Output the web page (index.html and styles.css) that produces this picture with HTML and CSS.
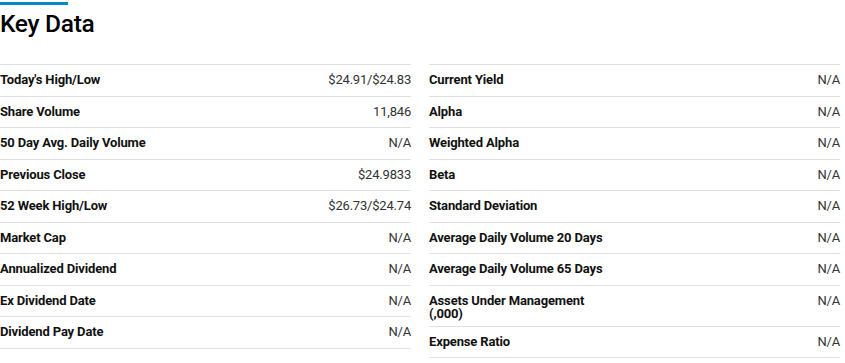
FILE: index.html
```html
<!DOCTYPE html>
<html lang="en">
<head>
<meta charset="utf-8">
<title>Key Data</title>
<link rel="stylesheet" href="styles.css">
</head>
<body>
<section class="key-data">
  <div class="accent"></div>
  <h2 class="title">Key Data</h2>
  <div class="columns">
    <dl class="list">
      <div class="row"><dt class="label">Today's High/Low</dt><dd class="value">$24.91/$24.83</dd></div>
      <div class="row"><dt class="label">Share Volume</dt><dd class="value">11,846</dd></div>
      <div class="row"><dt class="label">50 Day Avg. Daily Volume</dt><dd class="value">N/A</dd></div>
      <div class="row"><dt class="label">Previous Close</dt><dd class="value">$24.9833</dd></div>
      <div class="row"><dt class="label">52 Week High/Low</dt><dd class="value">$26.73/$24.74</dd></div>
      <div class="row"><dt class="label">Market Cap</dt><dd class="value">N/A</dd></div>
      <div class="row"><dt class="label">Annualized Dividend</dt><dd class="value">N/A</dd></div>
      <div class="row"><dt class="label">Ex Dividend Date</dt><dd class="value">N/A</dd></div>
      <div class="row"><dt class="label">Dividend Pay Date</dt><dd class="value">N/A</dd></div>
    </dl>
    <dl class="list">
      <div class="row"><dt class="label">Current Yield</dt><dd class="value">N/A</dd></div>
      <div class="row"><dt class="label">Alpha</dt><dd class="value">N/A</dd></div>
      <div class="row"><dt class="label">Weighted Alpha</dt><dd class="value">N/A</dd></div>
      <div class="row"><dt class="label">Beta</dt><dd class="value">N/A</dd></div>
      <div class="row"><dt class="label">Standard Deviation</dt><dd class="value">N/A</dd></div>
      <div class="row"><dt class="label">Average Daily Volume 20 Days</dt><dd class="value">N/A</dd></div>
      <div class="row"><dt class="label">Average Daily Volume 65 Days</dt><dd class="value">N/A</dd></div>
      <div class="row"><dt class="label">Assets Under Management (,000)</dt><dd class="value">N/A</dd></div>
      <div class="row"><dt class="label">Expense Ratio</dt><dd class="value">N/A</dd></div>
    </dl>
  </div>
</section>
</body>
</html>
```
FILE: styles.css
```css
* { box-sizing: border-box; }
html, body { margin: 0; padding: 0; background: #fff; }
body { font-family: Roboto, "Liberation Sans", Arial, sans-serif; color: #000; }

.key-data {
  width: 840px;
  padding-top: 2px;
}
.accent {
  width: 68px;
  height: 3px;
  background: #0088c8;
}
.title {
  margin: 4px 0 25px;
  font-family: Roboto, "Liberation Sans", sans-serif;
  font-size: 24.5px;
  line-height: 30px;
  font-weight: 500;
  color: #000;
  letter-spacing: -0.3px;
}
.columns {
  display: grid;
  grid-template-columns: 1fr 1fr;
  column-gap: 18px;
}
.list {
  margin: 0;
  border-top: 1px solid #e1e1e1;
}
.row {
  display: flex;
  justify-content: space-between;
  align-items: flex-start;
  min-height: 31.5px;
  padding: 8px 0 6px;
  border-bottom: 1px solid #e1e1e1;
  font-size: 13px;
  line-height: 13px;
}
.label {
  margin: 0;
  max-width: 45%;
  font-weight: 700;
  color: #111;
  letter-spacing: -0.15px;
}
.value {
  margin: 0;
  color: #333;
  text-align: right;
  letter-spacing: -0.2px;
}
```
